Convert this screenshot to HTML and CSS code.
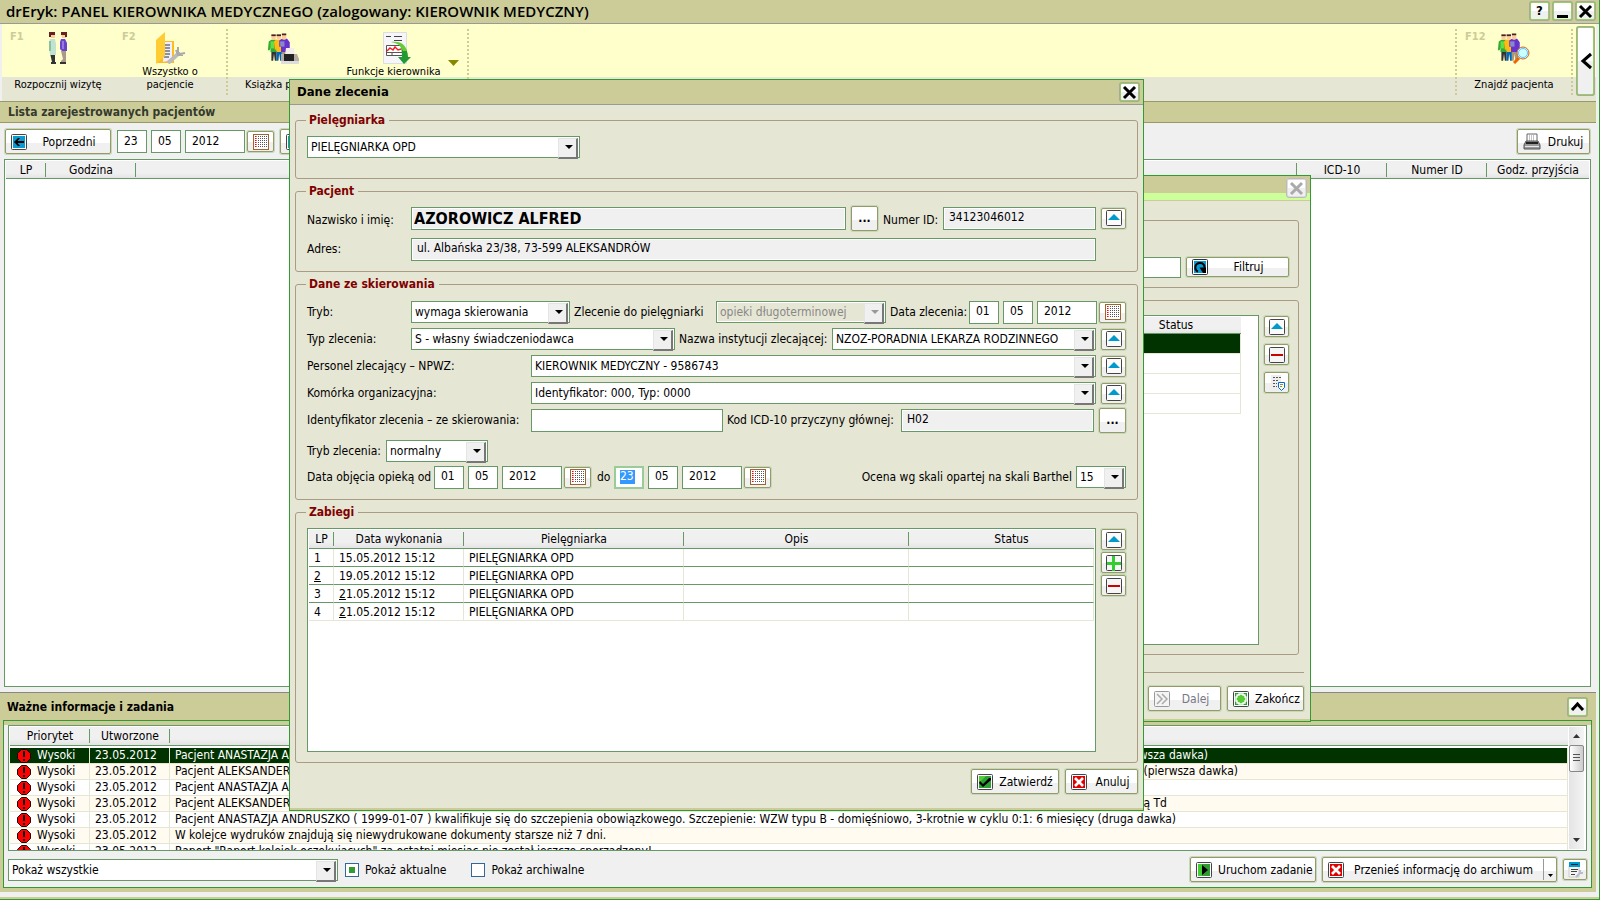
FILE: index.html
```html
<!DOCTYPE html>
<html lang="pl">
<head>
<meta charset="utf-8">
<title>drEryk: Panel kierownika medycznego</title>
<link rel="stylesheet" href="styles.css">
</head>
<body>
<svg class="sprite" aria-hidden="true">
  <defs>
    <symbol id="i-up" viewBox="0 0 16 16"><rect x=".5" y=".5" width="15" height="15" rx="1" fill="#fbfbfb" stroke="#444"/><path d="M8 4l6 6H2z" fill="#09c"/></symbol>
    <symbol id="i-minus" viewBox="0 0 16 16"><rect x=".5" y=".5" width="15" height="15" rx="1" fill="#f6f6f6" stroke="#444"/><path d="M2 7h12v2H2z" fill="#c00"/></symbol>
    <symbol id="i-plus" viewBox="0 0 16 16"><rect x=".5" y=".5" width="15" height="15" rx="1" fill="#f6f6f6" stroke="#444"/><path d="M6 1h3v6h6v3H9v6H6v-6H1V7h5z" fill="#3c3"/></symbol>
    <symbol id="i-cal" viewBox="0 0 16 16"><rect x=".5" y=".5" width="15" height="15" fill="#fff" stroke="#963"/><path d="M2.500 2v12" stroke="#f00" stroke-dasharray="1 1"/><path d="M3.500 2v12" stroke="#f66" stroke-dasharray="1 1"/><path d="M5.500 2v12M7.500 2v12M9.500 2v12M11.500 2v12M13.500 2v12" stroke="#555" stroke-dasharray="1 1"/></symbol>
    <symbol id="i-prev" viewBox="0 0 16 16"><rect x=".5" y=".5" width="15" height="15" rx="1" fill="#fff" stroke="#444"/><path d="M2 2h12v12H2z" fill="#0a9ad0"/><path d="M3 8l4-4h2L6.500 7H13v2H6.500L9 12H7z" fill="#000"/></symbol>
    <symbol id="i-ok" viewBox="0 0 16 16"><rect x=".5" y=".5" width="15" height="15" rx="1" fill="#fff" stroke="#444"/><path d="M2 2h12v12H2z" fill="#2fa035"/><path d="M2 2h7L2 9z" fill="#5c3"/><path d="M3 7l3 3 6-6h2v2l-8 7-4-4z" fill="#000"/></symbol>
    <symbol id="i-no" viewBox="0 0 16 16"><rect x=".5" y=".5" width="15" height="15" rx="1" fill="#fff" stroke="#444"/><path d="M2 2h12v12H2z" fill="#e00000"/><path d="M4 4l8 8M12 4l-8 8" stroke="#fff" stroke-width="2.600"/></symbol>
    <symbol id="i-play" viewBox="0 0 16 16"><rect x=".5" y=".5" width="15" height="15" rx="1" fill="#fff" stroke="#444"/><path d="M2 2h12v12H2z" fill="#393"/><path d="M2 2h4v12H2z" fill="#4c3"/><path d="M6 3l6 5-6 5z" fill="#000"/></symbol>
    <symbol id="i-end" viewBox="0 0 16 16"><rect x=".5" y=".5" width="15" height="15" rx="1" fill="#fff" stroke="#444"/><path d="M2 2h12v12H2z" fill="#2d9c38"/><path d="M6 3h4v1h2v2h1v4h-1v2h-2v1H6v-1H4v-2H3V6h1V4h2z" fill="#5c3" stroke="#fff" stroke-width="1.400"/></symbol>
    <symbol id="i-next" viewBox="0 0 16 16"><rect x=".5" y=".5" width="15" height="15" rx="1" fill="#f4f4f4" stroke="#999"/><path d="M3 3l5 5-5 5M8 3l5 5-5 5" fill="none" stroke="#aaa" stroke-width="1.500"/></symbol>
    <symbol id="i-refresh" viewBox="0 0 16 16"><rect x=".5" y=".5" width="15" height="15" rx="1" fill="#fff" stroke="#333"/><path d="M2 2h12v12H2z" fill="#0a9ad0"/><path d="M6 12.500C2 11 2.500 4 8 4c4 0 5 3 4.500 6" fill="none" stroke="#000" stroke-width="2"/><path d="M7.500 8.500H14V14h-3z" fill="#000"/></symbol>
    <symbol id="i-x" viewBox="0 0 15 15"><path d="M2 2l11 11M13 2L2 13" stroke="currentColor" stroke-width="3"/></symbol>
    <symbol id="i-alert" viewBox="0 0 14 14"><path d="M4.500.5h5l4 4v5l-4 4h-5l-4-4v-5z" fill="#f00" stroke="#200"/><path d="M6 2h2v6H6zM6 10h2v2H6z" fill="#000"/></symbol>
    <symbol id="i-print" viewBox="0 0 18 18"><path d="M4 1h10v8H4z" fill="#fff" stroke="#666"/><path d="M6 3h6M6 5h6M6 7h6" stroke="#888" stroke-dasharray="1 1"/><path d="M3 8h12l2 4v4H1v-4z" fill="#999" stroke="#555"/><path d="M3 9h12v2H3z" fill="#222"/><path d="M2 13h14v1H2z" fill="#e8e8e8"/></symbol>
    <symbol id="i-doc" viewBox="0 0 16 16"><path d="M2 0h10v16H2z" fill="#eee"/><path d="M4 2.500h8M4 5.500h6M4 8.500h4M4 11.500h4" stroke="#555" stroke-dasharray="2 1"/><path d="M9.500 7.500h6v5l-3 3-3-3z" fill="#ffc" stroke="#06e"/><path d="M11 9.500h3M11 11.500h2" stroke="#888"/></symbol>
    <symbol id="i-task" viewBox="0 0 16 16"><path d="M2 4h10v11H2z" fill="#f4f4f4" stroke="#ccc"/><path d="M2 0h11v5H2z" fill="#09c"/><path d="M4 2h7v1H4z" fill="#023"/><path d="M4 7.500h7M4 9.500h6M4 12.500h4" stroke="#444"/><path d="M9 15l5-5M13 8v3h3" stroke="#bbc" stroke-width="2" fill="none"/></symbol>
    <symbol id="i-people" viewBox="0 0 32 32">
      <path d="M5 20h6v11H9l-1-8-1 8H5z" fill="#333"/><path d="M2 9l3-2h6v14H4v-5l-1 3H1z" fill="#3a3"/><path d="M4 9h4v8H4z" fill="#6d4"/><path d="M5 2h5v3l-1 2H6L5 5z" fill="#fc9"/><path d="M5 1h5v2H5z" fill="#422"/>
      <path d="M11 20h6v11h-2l-1-8-1 8h-2z" fill="#06b"/><path d="M8 9l2-2h6v14h-5v-4l-2 2z" fill="#fb1"/><path d="M11 1h5v4l-1 2h-3l-1-2z" fill="#fc9"/><path d="M11 1h5v2h-5z" fill="#422"/>
      <path d="M17 19h7v12h-3l-1-8-1 8h-2z" fill="#aa9977"/><path d="M14 8l3-2h6l3 4v9h-2v2h-8v-6h-2z" fill="#63c"/><path d="M15 9h5v6h-5z" fill="#88c"/><path d="M17 1h5v4l-1 2h-3l-1-2z" fill="#fc9"/><path d="M17 0h5v2h-5z" fill="#422"/>
    </symbol>
  </defs>
</svg>

<div class="app">
  <header class="titlebar">
    <h1>drEryk: PANEL KIEROWNIKA MEDYCZNEGO (zalogowany: KIEROWNIK MEDYCZNY)</h1>
    <div class="winbtns">
      <button class="winbtn" type="button" aria-label="Pomoc">?</button>
      <button class="winbtn" type="button" aria-label="Minimalizuj"><svg width="15" height="15" viewBox="0 0 15 15"><path d="M2 11h11v3H2z"/></svg></button>
      <button class="winbtn" type="button" aria-label="Zamknij"><svg width="15" height="15"><use href="#i-x"/></svg></button>
    </div>
  </header>

  <nav class="toolbar">
    <button class="tool" type="button"><span class="key">F1</span>
      <svg width="22" height="32" viewBox="0 0 22 32"><path d="M4 30h5v2H4zM3 21h5v9H5z" fill="#333"/><path d="M3 7h5l1 5v11H3l-1-9z" fill="#bfe3cf"/><path d="M2 9h2v10H2z" fill="#8cc0a4"/><path d="M3 1h5v5H4z" fill="#fc9"/><path d="M2 0h6v3H4v2H2z" fill="#622"/><path d="M14 19h5v12h-5v-2l2-2z" fill="#a98"/><path d="M13 30h6v2h-6z" fill="#333"/><path d="M14 7h4l2 4v8h-5l-2-2v-7z" fill="#64c"/><path d="M15 9h2v8h-2z" fill="#97d"/><path d="M14 1h5v5h-4z" fill="#fc9"/><path d="M14 0h6v5h-2V3h-4z" fill="#622"/></svg>
      <span class="cap low">Rozpocznij wizytę</span></button>
    <button class="tool" type="button"><span class="key">F2</span>
      <svg width="32" height="32" viewBox="0 0 32 32"><path d="M9 9h11v22H2z" fill="#fb2"/><path d="M10 10h8v18l-9 2z" fill="#eef"/><path d="M10 13h6M10 16h6M10 19h6M10 22h6M10 25h5" stroke="#333"/><path d="M2 8l9-8v24l-9 8z" fill="#fc3"/><path d="M14 31l10-9" stroke="#bbb" stroke-width="4"/><path d="M24 15v5l2 2 5-1M22 18l2 5 5 0" fill="none" stroke="#aaa" stroke-width="2"/></svg>
      <span class="cap">Wszystko o<br>pacjencie</span></button>
    <button class="tool sep" type="button">
      <svg width="32" height="32" viewBox="0 0 32 32"><use href="#i-people" width="28" height="31"/><path d="M19 16h8l1 7h-10z" fill="#f4eee8"/><path d="M14 22h16l2 5v4H14z" fill="#b8aca4"/><path d="M17 22h10v7H17z" fill="#222"/><path d="M14 29h18v3H14z" fill="#ddd"/></svg>
      <span class="cap low">Książka przyjęć</span></button>
    <button class="tool fn" type="button">
      <svg width="28" height="32" viewBox="0 0 28 32"><path d="M.5.500h23v31H.5z" fill="#f6f6fa" stroke="#ddd"/><path d="M3 4.500h5M11 4.500h8M11 8.500h8" stroke="#444"/><path d="M3.500 13.500h16v10h-16zM3 20.500h16M9 20v4" fill="#fff" stroke="#555"/><path d="M4 19l3-3 3 2 2-3 3 3 3-1" fill="none" stroke="#e22" stroke-width="1.500"/><path d="M8 10c9-1 11 4 11 15h-4l6 7 7-7h-3c0-9-6-15-17-15z" fill="#293"/><path d="M8 10c9-1 14 2 16 9h-4c-2-5-5-8-12-9z" fill="#6c3"/></svg>
      <span class="cap">Funkcje kierownika</span></button>
    <button class="more sepr" type="button" aria-label="Więcej funkcji"><svg width="11" height="6" viewBox="0 0 11 6"><path d="M0 0h11L5.500 6z" fill="#880"/></svg></button>
    <button class="tool find sep sepr" type="button"><span class="key">F12</span>
      <svg width="34" height="32" viewBox="0 0 34 32"><use href="#i-people" width="28" height="31"/><path d="M22 26l-5 5" stroke="#e60" stroke-width="3"/><circle cx="26" cy="21" r="6" fill="#bff" stroke="#c63" stroke-width="1"/><circle cx="26" cy="21" r="4.500" fill="#cff" stroke="#7bf"/></svg>
      <span class="cap low">Znajdź pacjenta</span></button>
    <button class="winbtn tall" type="button" aria-label="Zwiń pasek"><svg width="12" height="18" viewBox="0 0 12 18"><path d="M11 2L3 9l8 7" fill="none" stroke="#000" stroke-width="3"/></svg></button>
  </nav>

  <main class="list">
    <h2 class="section">Lista zarejestrowanych pacjentów</h2>
    <div class="controls">
      <button class="btn prev" type="button"><svg width="16" height="16"><use href="#i-prev"/></svg><span>Poprzedni</span></button>
      <div class="date">
        <input class="field two" aria-label="Dzień" value="23"><input class="field two" aria-label="Miesiąc" value="05"><input class="field year" aria-label="Rok" value="2012">
        <button class="btn cal" type="button" aria-label="Kalendarz"><svg width="16" height="16"><use href="#i-cal"/></svg></button>
      </div>
      <button class="btn prev" type="button"><svg width="16" height="16"><use href="#i-prev"/></svg><span>Następny</span></button>
      <button class="btn print" type="button"><svg width="18" height="18"><use href="#i-print"/></svg><span>Drukuj</span></button>
    </div>
    <div class="grid patients">
      <table>
        <colgroup><col class="w40"><col class="w90"><col><col class="w90"><col class="w100"><col class="w102"></colgroup>
        <thead><tr><th>LP</th><th>Godzina</th><th></th><th>ICD-10</th><th>Numer ID</th><th>Godz. przyjścia</th></tr></thead>
      </table>
    </div>
  </main>

  <section class="tasks">
    <div class="taskhead"><h2>Ważne informacje i zadania</h2>
      <button class="winbtn" type="button" aria-label="Rozwiń"><svg width="15" height="15" viewBox="0 0 15 15"><path d="M2 11l5.500-6 5.500 6" fill="none" stroke="#000" stroke-width="3"/></svg></button></div>
    <div class="taskbox">
      <div class="grid log">
        <table>
          <colgroup><col class="w80"><col class="w80"><col></colgroup>
          <thead><tr><th>Priorytet</th><th>Utworzone</th><th></th></tr></thead>
          <tbody>
            <tr class="sel"><td><svg width="14" height="14"><use href="#i-alert"/></svg>Wysoki</td><td>23.05.2012</td><td>Pacjent ANASTAZJA ANDRUSZKO ( 1999-01-07 ) kwalifikuje się do szczepienia obowiązkowego. Szczepienie: WZW typu B - domięśniowo, 3-krotnie w cyklu 0:1: co 6 miesięcy (pierwsza dawka)</td></tr>
            <tr><td><svg width="14" height="14"><use href="#i-alert"/></svg>Wysoki</td><td>23.05.2012</td><td>Pacjent ALEKSANDER ANDRUSZKO ( 1999-01-07 ) kwalifikuje się do szczepienia obowiązkowego. Szczepienie: WZW typu B - domięśniowo, 3-krotnie w cyklu co 12 miesięcy, nowy (pierwsza dawka)</td></tr>
            <tr><td><svg width="14" height="14"><use href="#i-alert"/></svg>Wysoki</td><td>23.05.2012</td><td>Pacjent ANASTAZJA ANDRUSZKO ( 1999-01-07 ) kwalifikuje się do szczepienia obowiązkowego. Szczepienie: odra, świnka, różyczka</td></tr>
            <tr><td><svg width="14" height="14"><use href="#i-alert"/></svg>Wysoki</td><td>23.05.2012</td><td>Pacjent ALEKSANDER ANDRUSZKO ( 1999-01-07 ) kwalifikuje się do szczepienia obowiązkowego. Szczepienie: błonica, tężec - podskórnie, jedna dawka przypominająca szczepionką Td</td></tr>
            <tr><td><svg width="14" height="14"><use href="#i-alert"/></svg>Wysoki</td><td>23.05.2012</td><td>Pacjent ANASTAZJA ANDRUSZKO ( 1999-01-07 ) kwalifikuje się do szczepienia obowiązkowego. Szczepienie: WZW typu B - domięśniowo, 3-krotnie w cyklu 0:1: 6 miesięcy (druga dawka)</td></tr>
            <tr><td><svg width="14" height="14"><use href="#i-alert"/></svg>Wysoki</td><td>23.05.2012</td><td>W kolejce wydruków znajdują się niewydrukowane dokumenty starsze niż 7 dni.</td></tr>
            <tr><td><svg width="14" height="14"><use href="#i-alert"/></svg>Wysoki</td><td>23.05.2012</td><td>Raport "Raport kolejek oczekujących" za ostatni miesiąc nie został jeszcze sporządzony!</td></tr>
          </tbody>
        </table>
        <div class="scroll"><svg width="7" height="4" viewBox="0 0 7 4"><path d="M3.500 0L7 4H0z" fill="#333"/></svg><i class="thumb"></i><svg class="down" width="7" height="4" viewBox="0 0 7 4"><path d="M0 0h7L3.500 4z" fill="#333"/></svg></div>
      </div>
      <div class="taskctl">
        <span class="combo w330"><select aria-label="Filtr zadań"><option>Pokaż wszystkie</option></select></span>
        <label class="chk"><input type="checkbox" checked>Pokaż aktualne</label>
        <label class="chk"><input type="checkbox">Pokaż archiwalne</label>
        <button class="btn run" type="button"><svg width="16" height="16"><use href="#i-play"/></svg><span>Uruchom zadanie</span></button>
        <button class="btn arch" type="button"><svg width="16" height="16"><use href="#i-no"/></svg><span>Przenieś informację do archiwum</span><i class="split"><svg width="5" height="3" viewBox="0 0 5 3"><path d="M0 0h5L2.500 3z"/></svg></i></button>
        <button class="btn small task" type="button" aria-label="Opcje zadań"><svg width="16" height="16"><use href="#i-task"/></svg></button>
      </div>
    </div>
  </section>
</div>

<section class="dialog back" aria-label="Zlecenia">
  <div class="backhead"><button class="winbtn off" type="button" disabled aria-label="Zamknij okno"><svg width="15" height="15"><use href="#i-x"/></svg></button></div>
  <div class="backbody">
    <div class="group filter"><input class="field" aria-label="Szukaj"><button class="btn" type="button"><svg width="16" height="16"><use href="#i-refresh"/></svg><span>Filtruj</span></button></div>
    <div class="group orders">
      <div class="grid"><table>
        <colgroup><col><col class="w130"></colgroup>
        <thead><tr><th></th><th>Status</th></tr></thead>
        <tbody><tr class="sel"><td></td><td></td></tr><tr><td></td><td></td></tr><tr><td></td><td></td></tr><tr><td></td><td></td></tr></tbody>
      </table></div>
      <div class="side">
        <button class="btn small" type="button" aria-label="Otwórz"><svg width="16" height="16"><use href="#i-up"/></svg></button>
        <button class="btn small" type="button" aria-label="Usuń"><svg width="16" height="16"><use href="#i-minus"/></svg></button>
        <button class="btn small" type="button" aria-label="Szczegóły"><svg width="16" height="16"><use href="#i-doc"/></svg></button>
      </div>
    </div>
    <div class="backfoot">
      <button class="btn off" type="button" disabled><svg width="16" height="16"><use href="#i-next"/></svg><span>Dalej</span></button>
      <button class="btn" type="button"><svg width="16" height="16"><use href="#i-end"/></svg><span>Zakończ</span></button>
    </div>
  </div>
</section>

<form class="dialog front" aria-labelledby="dt">
  <div class="dialoghead"><h2 id="dt">Dane zlecenia</h2><button class="winbtn" type="button" aria-label="Zamknij"><svg width="15" height="15"><use href="#i-x"/></svg></button></div>
  <div class="dialogbody">
    <fieldset class="nurse"><legend>Pielęgniarka</legend>
      <span class="combo w273"><select aria-label="Pielęgniarka"><option>PIELĘGNIARKA OPD</option></select></span>
    </fieldset>

    <fieldset class="patient"><legend>Pacjent</legend>
      <div class="row">
        <label class="c104" for="name">Nazwisko i imię:</label><input id="name" class="field ro name grow" readonly value="AZOROWICZ ALFRED">
        <button class="btn dots" type="button">...</button>
        <label class="pid" for="pid">Numer ID:</label><input id="pid" class="field ro w153" readonly value="34123046012">
        <button class="btn small end" type="button" aria-label="Otwórz kartę"><svg width="16" height="16"><use href="#i-up"/></svg></button>
      </div>
      <div class="row">
        <label class="c104" for="adr">Adres:</label><input id="adr" class="field ro grow" readonly value="ul. Albańska 23/38, 73-599 ALEKSANDRÓW"><span class="endgap"></span>
      </div>
    </fieldset>

    <fieldset class="referral"><legend>Dane ze skierowania</legend>
      <div class="row">
        <label class="c104" for="tryb">Tryb:</label><span class="combo w159"><select id="tryb"><option>wymaga skierowania</option></select></span>
        <label class="gap4 grow" for="zl">Zlecenie do pielęgniarki</label><span class="combo dis w170"><select id="zl" disabled><option>opieki długoterminowej</option></select></span>
        <span class="gap4 dlabel">Data zlecenia:</span>
        <div class="date">
          <input class="field two" aria-label="Dzień zlecenia" value="01"><input class="field two" aria-label="Miesiąc zlecenia" value="05"><input class="field year" aria-label="Rok zlecenia" value="2012">
          <button class="btn cal" type="button" aria-label="Kalendarz"><svg width="16" height="16"><use href="#i-cal"/></svg></button>
        </div>
      </div>
      <div class="row">
        <label class="c104" for="typ">Typ zlecenia:</label><span class="combo w264"><select id="typ"><option>S - własny świadczeniodawca</option></select></span>
        <label class="gap4 grow" for="inst">Nazwa instytucji zlecającej:</label><span class="combo w264"><select id="inst"><option>NZOZ-PORADNIA LEKARZA RODZINNEGO</option></select></span>
        <button class="btn small end" type="button" aria-label="Instytucja"><svg width="16" height="16"><use href="#i-up"/></svg></button>
      </div>
      <div class="row">
        <label class="c224" for="pers">Personel zlecający – NPWZ:</label><span class="combo grow"><select id="pers"><option>KIEROWNIK MEDYCZNY - 9586743</option></select></span>
        <button class="btn small end" type="button" aria-label="Personel"><svg width="16" height="16"><use href="#i-up"/></svg></button>
      </div>
      <div class="row">
        <label class="c224" for="kom">Komórka organizacyjna:</label><span class="combo grow"><select id="kom"><option>Identyfikator: 000, Typ: 0000</option></select></span>
        <button class="btn small end" type="button" aria-label="Komórka"><svg width="16" height="16"><use href="#i-up"/></svg></button>
      </div>
      <div class="row">
        <label class="c224" for="idz">Identyfikator zlecenia – ze skierowania:</label><input id="idz" class="field w192">
        <label class="gap4 grow" for="icd">Kod ICD-10 przyczyny głównej:</label><input id="icd" class="field ro w193" readonly value="H02">
        <button class="btn dots end" type="button">...</button>
      </div>
      <div class="row mode">
        <label class="c79" for="tz">Tryb zlecenia:</label><span class="combo w102"><select id="tz"><option>normalny</option></select></span>
      </div>
      <div class="row care">
        <span class="c127">Data objęcia opieką od</span>
        <div class="date">
          <input class="field two" aria-label="Od: dzień" value="01"><input class="field two" aria-label="Od: miesiąc" value="05"><input class="field year" aria-label="Od: rok" value="2012">
          <button class="btn cal" type="button" aria-label="Kalendarz"><svg width="16" height="16"><use href="#i-cal"/></svg></button>
        </div>
        <span class="until">do</span>
        <div class="date">
          <input class="field two focus" aria-label="Do: dzień" value="23"><input class="field two" aria-label="Do: miesiąc" value="05"><input class="field year" aria-label="Do: rok" value="2012">
          <button class="btn cal" type="button" aria-label="Kalendarz"><svg width="16" height="16"><use href="#i-cal"/></svg></button>
        </div>
        <label class="barthel" for="bar">Ocena wg skali opartej na skali Barthel</label><span class="combo w50"><select id="bar"><option>15</option></select></span>
      </div>
    </fieldset>

    <fieldset class="procs"><legend>Zabiegi</legend>
      <div class="procrow">
        <div class="grid">
          <table>
            <colgroup><col class="w25"><col class="w130"><col class="w220"><col class="w225"><col></colgroup>
            <thead><tr><th>LP</th><th>Data wykonania</th><th>Pielęgniarka</th><th>Opis</th><th>Status</th></tr></thead>
            <tbody>
              <tr><td>1</td><td>15.05.2012 15:12</td><td>PIELĘGNIARKA OPD</td><td></td><td></td></tr>
              <tr><td><u>2</u></td><td>19.05.2012 15:12</td><td>PIELĘGNIARKA OPD</td><td></td><td></td></tr>
              <tr><td>3</td><td><u>2</u>1.05.2012 15:12</td><td>PIELĘGNIARKA OPD</td><td></td><td></td></tr>
              <tr><td>4</td><td><u>2</u>1.05.2012 15:12</td><td>PIELĘGNIARKA OPD</td><td></td><td></td></tr>
            </tbody>
          </table>
        </div>
        <div class="side">
          <button class="btn small" type="button" aria-label="Otwórz zabieg"><svg width="16" height="16"><use href="#i-up"/></svg></button>
          <button class="btn small" type="button" aria-label="Dodaj zabieg"><svg width="16" height="16"><use href="#i-plus"/></svg></button>
          <button class="btn small" type="button" aria-label="Usuń zabieg"><svg width="16" height="16"><use href="#i-minus"/></svg></button>
        </div>
      </div>
    </fieldset>

    <div class="dialogfoot">
      <button class="btn" type="button"><svg width="16" height="16"><use href="#i-ok"/></svg><span>Zatwierdź</span></button>
      <button class="btn cancel" type="button"><svg width="16" height="16"><use href="#i-no"/></svg><span>Anuluj</span></button>
    </div>
  </div>
</form>
</body>
</html>
```
FILE: styles.css
```css
* { box-sizing: border-box; }
body {
  margin: 0;
  height: 100vh;
  overflow: hidden;
  background: #f0f0f0;
  color: #000;
  font: 12px/16px "DejaVu Sans Condensed", "DejaVu Sans", sans-serif;
}
h1, h2 { margin: 0; font-size: 12px; line-height: 16px; }
svg { display: block; flex: none; }
.sprite { position: absolute; width: 0; height: 0; }
button, input, select { font: inherit; color: inherit; margin: 0; }
button { cursor: pointer; }

/* Application window */
.app {
  height: 100vh;
  display: flex;
  flex-direction: column;
  padding: 0 3px 7px 0;
  border-right: 1px solid #393;
  border-bottom: 1px solid #393;
  background: linear-gradient(#cc9, #cc9) bottom / 100% 2px no-repeat, #f0f0f0;
}
.titlebar {
  display: flex;
  align-items: center;
  justify-content: space-between;
  height: 24px;
  margin-right: -3px;
  padding: 0 3px 1px 6px;
  background: #cc9;
  border-bottom: 1px solid #999;
}
.titlebar h1 { font: 600 15px/20px "Open Sans", sans-serif; }
.winbtns { display: flex; gap: 2px; }
.winbtn {
  display: flex;
  align-items: center;
  justify-content: center;
  width: 21px;
  height: 20px;
  padding: 0;
  border: 2px solid #9c6;
  outline: 1px solid #aa9;
  outline-offset: -1px;
  border-radius: 3px;
  background: linear-gradient(#fff 50%, #f0f0f0 50%);
  font-weight: 700;
  font-size: 13px;
}
.winbtn.off { border-color: #ddd; outline-color: #bbb; color: #aaa; }
.winbtn.tall { width: 19px; height: 70px; margin: 2px 1px 0 3px; }

.toolbar {
  display: flex;
  height: 77px;
  margin-left: 2px;
  background: linear-gradient(#ffc 53px, #e6e6d4 53px);
}
.tool {
  position: relative;
  display: flex;
  flex-direction: column;
  align-items: center;
  width: 112px;
  height: 66px;
  margin-top: 5px;
  padding: 3px 0 0;
  border: 0;
  background: none;
  font-size: 11px;
  line-height: 13px;
}
.key { position: absolute; left: 8px; top: 1px; color: #cc9; font-weight: 700; }
.cap { white-space: nowrap; padding-top: 1px; }
.cap.low { padding-top: 14px; }
.sep { border-left: 2px dotted #cc9; }
.sepr { border-right: 2px dotted #cc9; }
.fn { width: 106px; padding-left: 5px; }
.fn svg { margin-left: 6px; }
.more { width: 25px; height: 66px; margin-top: 5px; padding: 2px 0 0 4px; border-width: 0 2px 0 0; background: none; }
.find { width: 118px; margin-left: auto; }

.list { flex: 1; display: flex; flex-direction: column; min-height: 0; }
.section {
  padding: 2px 8px;
  border: 1px solid #996;
  border-width: 1px 0;
  background: #cc9;
  color: #343a2c;
}
.controls { display: flex; align-items: center; gap: 6px; padding: 6px 6px 5px 5px; }
.prev { width: 106px; }
.print { width: 73px; margin-left: auto; }

/* Buttons */
.btn {
  display: flex;
  align-items: center;
  gap: 6px;
  height: 25px;
  padding: 0 5px;
  border: 1px solid #996;
  border-radius: 2px;
  box-shadow: 0 0 0 1px #c3d9bd;
  background: linear-gradient(#fff 55%, #f0f0f0 55%);
  white-space: nowrap;
}
.btn span { flex: 1; text-align: center; }
.btn.off { color: #778; }
.btn.small { width: 24px; height: 21px; padding: 0; justify-content: center; flex: none; }
.btn.cal { width: 27px; height: 21px; padding: 0; justify-content: center; flex: none; }
.btn.dots { width: 27px; justify-content: center; flex: none; font-weight: 700; }

/* Fields */
.field {
  min-width: 0;
  height: 23px;
  padding: 0 6px 2px;
  border: 1px solid #696;
  border-radius: 0;
  background: #fff;
  outline: 0;
}
.field.ro { background: #f0f0f0; padding-left: 5px; box-shadow: inset 0 0 0 1px #fff; }
.field.name { font-size: 16px; font-weight: 700; padding: 0 2px; }
.date { display: flex; align-items: center; gap: 4px; }
.date .cal { margin-left: -2px; }
.two { width: 30px; padding-right: 0; }
.year { width: 60px; }
.field.focus {
  padding: 0 0 2px 4px;
  border: 2px solid #9c9;
  color: #fff;
  background: linear-gradient(#39f, #39f) 4px 2px / 15px 14px no-repeat, #fff;
}
.combo { position: relative; display: inline-flex; flex: none; height: 22px; min-width: 0; }
.combo.grow { flex: 1; }
.combo select {
  appearance: none;
  width: 100%;
  height: 22px;
  padding: 0 20px 0 3px;
  border: 1px solid #696;
  border-radius: 0;
  background: #fff;
}
.combo::before {
  content: "";
  position: absolute;
  right: 2px;
  top: 2px;
  width: 17px;
  height: 18px;
  border: 1px solid #e4e4e4;
  border-right: 2px solid #777;
  border-bottom: 2px solid #777;
  background: #f0f0f0;
  pointer-events: none;
}
.combo::after {
  content: "";
  position: absolute;
  right: 7px;
  top: 9px;
  border: 4px solid transparent;
  border-top-color: #000;
  border-bottom: 0;
  pointer-events: none;
}
.combo.dis select { background: #e6e6d4; color: #888; opacity: 1; box-shadow: inset 0 0 0 1px #fff; }
.combo.dis::after { border-top-color: #999; }
.chk { display: flex; align-items: center; gap: 6px; }
.chk input {
  appearance: none;
  width: 14px;
  height: 14px;
  border: 1px solid #369;
  background: #fff;
}
.chk input:checked { background: #393; box-shadow: inset 0 0 0 3px #fff; }

/* Grids */
.grid { border: 1px solid #696; background: #fff; min-width: 0; padding: 1px; }
table { width: 100%; border-collapse: separate; border-spacing: 0; table-layout: fixed; }
th {
  height: 18px;
  padding: 0;
  font-weight: 400;
  line-height: 16px;
  border-bottom: 1px solid #696;
  background: linear-gradient(#696, #696) right 2px / 1px 14px no-repeat, linear-gradient(#f0f0f0 12px, #e4e4e4);
}
th:last-child { background: linear-gradient(#f0f0f0 12px, #e4e4e4); }
td { padding: 0; white-space: nowrap; overflow: hidden; }
.patients { flex: 1; margin: 0 5px 5px 4px; }
.w25 { width: 25px; } .w40 { width: 40px; } .w50 { width: 50px; } .w80 { width: 80px; } .w90 { width: 90px; }
.w100 { width: 100px; } .w102 { width: 102px; } .w130 { width: 130px; } .w153 { width: 153px; } .w159 { width: 159px; }
.w170 { width: 170px; } .w192 { width: 192px; } .w193 { width: 193px; } .w220 { width: 220px; } .w225 { width: 225px; }
.w264 { width: 264px; } .w273 { width: 273px; } .w330 { width: 330px; }

/* Tasks */
.tasks { border-top: 1px solid #888; padding: 0 4px 4px 3px; background: #cc9; }
.taskhead { display: flex; align-items: center; justify-content: space-between; height: 27px; padding: 0 4px; }
.taskbox {
  border: 1px solid #393;
  padding: 4px 4px 5px;
  background: linear-gradient(#cc9 4px, #f0f0f0 4px);
}
.log { position: relative; display: flex; height: 126px; overflow: hidden; padding-right: 2px; }
.log table { flex: 1; align-self: flex-start; }
.log thead th { height: 19px; }
.log tbody::before { content: ""; display: block; height: 2px; }
.log td { height: 16px; line-height: 15px; padding-left: 5px; border-bottom: 1px solid #e6e6d4; border-right: 1px solid #e6e6d4; }
.log td:first-child { display: flex; align-items: center; gap: 6px; padding-left: 7px; }
.log tr:nth-child(even) td { background: #fffbf0; }
.log .sel td, .orders .sel td { background: #030; color: #fff; }
.scroll {
  width: 15px;
  display: flex;
  flex-direction: column;
  align-items: center;
  padding: 7px 0;
  margin-left: 1px;
  background: linear-gradient(90deg, #e4e4e4, #f4f4f4);
}
.thumb {
  width: 15px;
  height: 27px;
  margin-top: 7px;
  border: 1px solid #888;
  border-radius: 2px;
  background: repeating-linear-gradient(#555 0 1px, transparent 1px 3px) 3px 8px / 7px 9px no-repeat, linear-gradient(90deg, #fff, #ccc);
}
.down { margin-top: auto; }
.taskctl { display: flex; align-items: center; padding-top: 6px; }
.taskctl .chk { margin-left: 7px; }
.taskctl .chk + .chk { margin-left: 25px; }
.taskctl .run { margin-left: auto; width: 126px; }
.taskctl .arch { margin-left: 6px; width: 235px; padding-right: 0; }
.taskctl .task { margin-left: 6px; }
.split { display: flex; align-items: flex-end; justify-content: center; width: 13px; height: 21px; padding-bottom: 3px; border-left: 1px solid #999; }

/* Dialog windows */
.dialog {
  position: absolute;
  border: 1px solid #393;
  background: #e6e6d4;
  box-shadow: inset 0 -2px #cc9;
}
.front { left: 289px; top: 79px; width: 855px; }
.dialoghead {
  display: flex;
  align-items: center;
  justify-content: space-between;
  height: 25px;
  padding: 0 3px 0 7px;
  background: #cc9;
  border-bottom: 1px solid #999;
}
.dialoghead h2 { font-size: 13px; }
.dialogbody { padding: 7px 5px 16px; }
fieldset {
  margin: 0 0 4px;
  padding: 8px 11px 11px;
  border: 1px solid #aa9b85;
  border-radius: 3px;
  min-width: 0;
}
legend { margin-left: -1px; padding: 0 4px 0 3px; color: #800000; font-weight: 700; line-height: 16px; }
fieldset.nurse { padding-bottom: 20px; }
fieldset.procs { padding-bottom: 10px; }
.row { display: flex; align-items: center; height: 22px; white-space: nowrap; }
.row + .row { margin-top: 5px; }
.row + .row.mode { margin-top: 9px; }
.row + .row.care { margin-top: 4px; }
.grow { flex: 1; }
.patient .row + .row { margin-top: 9px; }
.patient .row:first-of-type label { padding-top: 4px; }
.c104 { width: 104px; }
.c224 { width: 224px; }
.c79 { width: 79px; }
.c127 { width: 127px; }
.gap4 { padding-left: 4px; }
.row .dots { margin-left: 5px; }
.pid { padding: 0 5px; width: 65px; }
.row .end { margin-left: 5px; width: 25px; }
.row .dots.end { width: 27px; }
.endgap { width: 30px; }
.dlabel { width: 83px; }
.until { padding: 0 6px; width: 23px; }
.barthel { margin-left: auto; padding-right: 4px; }
.referral { padding-top: 9px; }
.procrow { display: flex; gap: 5px; }
.procrow .grid { flex: 1; height: 224px; }
.side { display: flex; flex-direction: column; }
.procrow .side { gap: 2px; padding-top: 1px; }
.side .btn.small { width: 25px; }
.procs th { height: 19px; }
.procs th:last-child { padding-left: 20px; }
.procs td { height: 18px; line-height: 16px; padding-left: 5px; border-bottom: 1px solid #696; border-right: 1px solid #e6e6d4; }
.procs tr:last-child td { border-bottom-color: #e6e6d4; }
.dialogfoot { display: flex; justify-content: flex-end; gap: 6px; padding-top: 2px; }
.dialogfoot .btn { width: 88px; }
.dialogfoot .cancel { width: 73px; }

.back { left: 1000px; top: 175px; width: 311px; }
.backhead {
  display: flex;
  justify-content: flex-end;
  height: 25px;
  padding: 2px 3px 0;
  background: linear-gradient(#cc9 17px, #cf9 17px);
  border-bottom: 1px solid #cc9;
}
.backbody { padding: 19px 11px 10px 10px; }
.group { display: flex; border: 1px solid #aa9b85; border-radius: 3px; }
.filter { align-items: flex-start; gap: 5px; height: 68px; padding: 36px 9px 0; margin-bottom: 12px; }
.filter .field { flex: 1; height: 21px; }
.filter .btn { width: 103px; height: 20px; }
.orders { gap: 5px; padding: 14px 9px 9px; }
.orders .grid { flex: 1; height: 330px; padding-right: 17px; }
.orders th { height: 17px; }
.orders td { height: 20px; border-bottom: 1px solid #e6e6d4; }
.orders td:last-child { border-right: 1px solid #e6e6d4; }
.orders .side { gap: 7px; padding-top: 1px; }
.backfoot {
  display: flex;
  justify-content: flex-end;
  gap: 6px;
  margin: 17px -5px 0 0;
  padding-top: 13px;
  border-top: 1px solid #aa9b85;
}
.backfoot .btn { width: 73px; }
.backfoot .btn + .btn { width: 77px; }
```
